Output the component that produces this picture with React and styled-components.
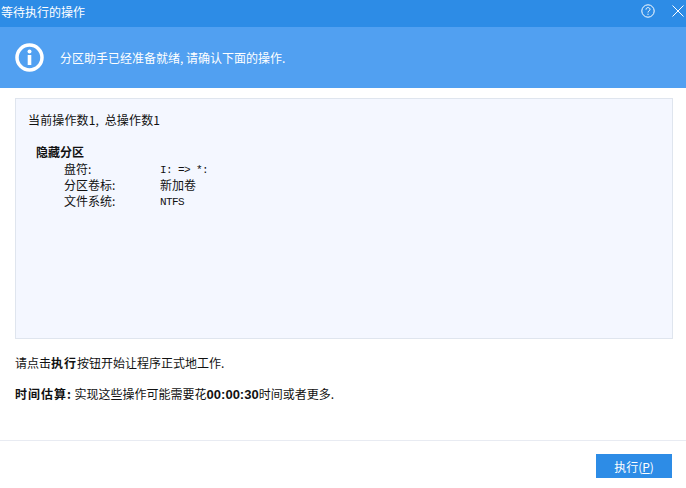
import React from "react";
import styled, { createGlobalStyle } from "styled-components";

const GlobalStyle = createGlobalStyle`
  html, body {
    margin: 0;
    padding: 0;
    background: #fff;
  }
  body {
    font-family: "Noto Sans CJK SC", "Liberation Sans", sans-serif;
    font-size: 12px;
    color: #111;
  }
`;

const details = [
  { label: "盘符:", value: "I: => *:", mono: true },
  { label: "分区卷标:", value: "新加卷" },
  { label: "文件系统:", value: "NTFS", mono: true },
];

const App = () => {
  return (
    <Window>
      <GlobalStyle />
      <TitleBar>
        <Title>等待执行的操作</Title>
        <TitleIcons>
          <svg width="14" height="14" viewBox="0 0 14 14" fill="none" stroke="#fff">
            <circle cx="7" cy="7" r="6.200" />
            <path d="M5 5.600c0-1.300.9-2 2-2s2 .7 2 1.800c0 1.500-2 1.500-2 3.100" />
            <path d="M7 9.700v1.200" />
          </svg>
          <svg width="12" height="12" viewBox="0 0 12 12" fill="none" stroke="#fff">
            <path d="M.5.5l11 11M11.500.5l-11 11" />
          </svg>
        </TitleIcons>
      </TitleBar>

      <Banner>
        <svg width="29" height="29" viewBox="0 0 29 29">
          <circle cx="14.500" cy="14.500" r="12.500" fill="none" stroke="#fff" strokeWidth="3.500" />
          <circle cx="14.500" cy="8.500" r="2" fill="#fff" />
          <rect x="12.700" y="12" width="3.600" height="10" fill="#fff" />
        </svg>
        <BannerText>分区助手已经准备就绪, 请确认下面的操作.</BannerText>
      </Banner>

      <Content>
        <Panel>
          <Summary>当前操作数1,&nbsp;&nbsp;总操作数1</Summary>
          <OperationName>隐藏分区</OperationName>
          <DetailList>
            {details.map((item) => (
              <React.Fragment key={item.label}>
                <DetailLabel>{item.label}</DetailLabel>
                <DetailValue $mono={item.mono}>{item.value}</DetailValue>
              </React.Fragment>
            ))}
          </DetailList>
        </Panel>

        <Note>
          请点击<b>执行</b>按钮开始让程序正式地工作.
        </Note>
        <Note>
          <b>时间估算:</b> 实现这些操作可能需要花<Time>00:00:30</Time>时间或者更多.
        </Note>
      </Content>

      <Footer>
        <ActionButton>
          执行(<u>P</u>)
        </ActionButton>
      </Footer>
    </Window>
  );
};

const Window = styled.div`
  width: 686px;
  height: 488px;
  display: flex;
  flex-direction: column;
  overflow: hidden;
`;

const TitleBar = styled.header`
  box-sizing: border-box;
  height: 27px;
  flex: none;
  display: flex;
  align-items: center;
  justify-content: space-between;
  padding: 0 2px 5px 1px;
  background: #2d8ce6;
  color: #fff;
`;

const Title = styled.h1`
  margin: 0;
  font-size: 12px;
  font-weight: 400;
`;

const TitleIcons = styled.div`
  display: flex;
  align-items: center;
  gap: 17px;
`;

const Banner = styled.section`
  height: 61px;
  flex: none;
  display: flex;
  align-items: center;
  gap: 16px;
  padding: 0 0 0 15px;
  background: #51a0f1;
  color: #fff;
`;

const BannerText = styled.p`
  margin: 0;
  font-size: 12px;
`;

const Content = styled.main`
  flex: 1;
  padding: 10px 13px 0 15px;
`;

const Panel = styled.section`
  box-sizing: border-box;
  height: 241px;
  padding: 13px 12px;
  background: #f4f7ff;
  border: 1px solid #dfe5ee;
  margin-bottom: 15px;
`;

const Summary = styled.p`
  margin: 0 0 16px;
  line-height: 16px;
  letter-spacing: 0.15px;
`;

const OperationName = styled.h2`
  margin: 0 0 1px 8px;
  font-size: 12px;
  line-height: 16px;
  font-weight: 700;
`;

const DetailList = styled.div`
  display: grid;
  grid-template-columns: 96px 1fr;
  grid-auto-rows: 16px;
  margin-left: 36px;
  line-height: 16px;
`;

const DetailLabel = styled.span`
  display: block;
`;

const DetailValue = styled.span`
  display: block;
  font-family: ${(props) =>
    props.$mono ? '"Liberation Mono", monospace' : "inherit"};
  font-size: ${(props) => (props.$mono ? "11px" : "12px")};
  letter-spacing: ${(props) => (props.$mono ? "-0.6px" : "0")};
  line-height: ${(props) => (props.$mono ? "18px" : "16px")};
`;

const Note = styled.p`
  margin: 0 0 14px;
  line-height: 17px;

  b {
    letter-spacing: 1px;
  }
`;

const Time = styled.b`
  font-family: "Liberation Sans", sans-serif;
  font-size: 13px;
  && {
    letter-spacing: 0;
  }
`;

const Footer = styled.footer`
  box-sizing: border-box;
  height: 48px;
  flex: none;
  display: flex;
  justify-content: flex-end;
  align-items: flex-start;
  padding: 13px 14px 0 0;
  border-top: 1px solid #e8ebf2;
`;

const ActionButton = styled.button`
  width: 76px;
  height: 24px;
  padding: 0;
  border: none;
  background: #2d8ce6;
  color: #fff;
  font-family: inherit;
  font-size: 12px;
`;

export default App;
